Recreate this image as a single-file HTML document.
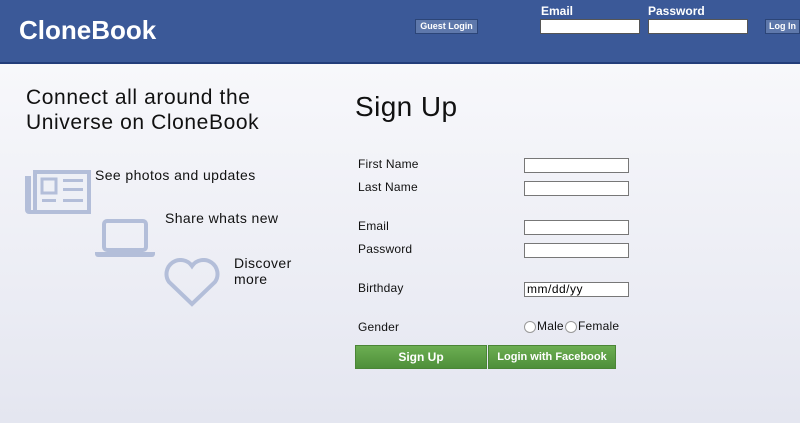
<!DOCTYPE html>
<html><head><style>
*{margin:0;padding:0;box-sizing:border-box}
body{width:800px;height:423px;overflow:hidden;font-family:"Liberation Sans",sans-serif;background:linear-gradient(#fbfbfd,#e4e6f0);position:relative}
.hdr{position:absolute;left:0;top:0;width:800px;height:64px;background:#3b5998;border-bottom:2px solid #233e7a}
.a{position:absolute}
.logo{left:19px;top:15px;color:#fff;font-size:26px;font-weight:bold;letter-spacing:0}
.btn{background:#5e78ab;border:1px solid #2c4577;color:#fff;font-size:9px;font-weight:bold;text-align:center;line-height:13px}
.lbl{color:#fff;font-size:12px;font-weight:bold}
.in{background:#fff;border:1px solid #555}
.t{color:#111;letter-spacing:0.4px}
.f{font-size:12px;color:#111;letter-spacing:0.2px}
.g{background:linear-gradient(#6cae52,#4e8f3a);color:#fff;font-size:12px;font-weight:bold;text-align:center;line-height:22px;border:1px solid #4a8536}
.r{width:12px;height:12px;border:1px solid #999;border-radius:50%;background:#fff}
</style></head><body>
<div class="hdr"></div>
<div class="a logo">CloneBook</div>
<div class="a btn" style="left:415px;top:19px;width:63px;height:15px">Guest Login</div>
<div class="a lbl" style="left:541px;top:4px">Email</div>
<div class="a lbl" style="left:648px;top:4px">Password</div>
<div class="a in" style="left:540px;top:19px;width:100px;height:15px"></div>
<div class="a in" style="left:648px;top:19px;width:100px;height:15px"></div>
<div class="a btn" style="left:765px;top:19px;width:35px;height:15px">Log In</div>
<div class="a t" style="left:26px;top:85px;font-size:21px;line-height:25px;letter-spacing:0.6px">Connect all around the<br>Universe on CloneBook</div>
<svg class="a" style="left:25px;top:166px" width="68" height="50" viewBox="0 0 68 50" fill="#b3bed9">
<path d="M0 10h6v34h2V4h58v44H4a4 4 0 0 1-4-4z"/><rect x="12" y="8" width="50" height="36" fill="#eef0f6"/>
<rect x="17" y="13" width="14" height="14" fill="none" stroke="#b3bed9" stroke-width="3"/>
<rect x="38" y="13" width="20" height="3"/><rect x="38" y="22" width="20" height="3"/><rect x="38" y="33" width="20" height="3"/><rect x="17" y="33" width="14" height="3"/></svg>
<div class="a t" style="left:95px;top:167px;font-size:14px">See photos and updates</div>
<svg class="a" style="left:95px;top:219px" width="60" height="40" viewBox="0 0 60 40" fill="#b3bed9">
<rect x="9" y="2" width="42" height="29" rx="3" fill="none" stroke="#b3bed9" stroke-width="4"/><path d="M0 33h60v2a3 3 0 0 1-3 3H3a3 3 0 0 1-3-3z"/></svg>
<div class="a t" style="left:165px;top:210px;font-size:14px">Share whats new</div>
<svg class="a" style="left:163px;top:258px" width="58" height="50" viewBox="0 0 58 50"><path d="M29 46L6 24A13 13 0 0 1 29 8A13 13 0 0 1 52 24z" fill="none" stroke="#b3bed9" stroke-width="4"/></svg>
<div class="a t" style="left:234px;top:255px;font-size:14px;line-height:16px">Discover<br>more</div>
<div class="a t" style="left:355px;top:91px;font-size:28px">Sign Up</div>
<div class="a f" style="left:358px;top:157px">First Name</div>
<div class="a f" style="left:358px;top:180px">Last Name</div>
<div class="a f" style="left:358px;top:219px">Email</div>
<div class="a f" style="left:358px;top:242px">Password</div>
<div class="a f" style="left:358px;top:281px">Birthday</div>
<div class="a f" style="left:358px;top:320px">Gender</div>
<div class="a in" style="left:524px;top:158px;width:105px;height:15px;border-color:#777"></div>
<div class="a in" style="left:524px;top:181px;width:105px;height:15px;border-color:#777"></div>
<div class="a in" style="left:524px;top:220px;width:105px;height:15px;border-color:#777"></div>
<div class="a in" style="left:524px;top:243px;width:105px;height:15px;border-color:#777"></div>
<div class="a in" style="left:524px;top:282px;width:105px;height:15px;border-color:#777;font-size:12px;line-height:13px;padding-left:2px;letter-spacing:0.5px">mm/dd/yy</div>
<div class="a r" style="left:524px;top:321px"></div><div class="a f" style="left:537px;top:319px">Male</div>
<div class="a r" style="left:565px;top:321px"></div><div class="a f" style="left:578px;top:319px">Female</div>
<div class="a g" style="left:355px;top:345px;width:132px;height:24px">Sign Up</div>
<div class="a g" style="left:488px;top:345px;width:128px;height:24px;font-size:11px">Login with Facebook</div>
</body></html>
